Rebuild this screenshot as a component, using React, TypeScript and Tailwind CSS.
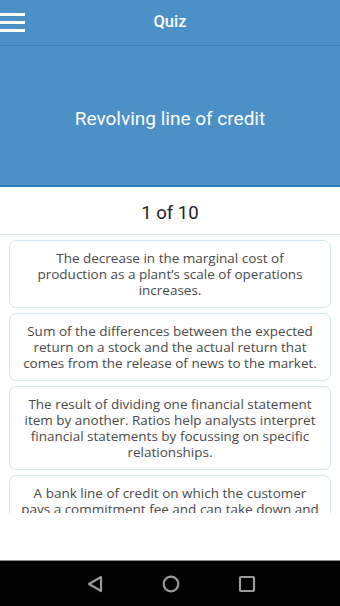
const CARDS = [
  'The decrease in the marginal cost of production as a plant\u2019s scale of operations increases.',
  'Sum of the differences between the expected return on a stock and the actual return that comes from the release of news to the market.',
  'The result of dividing one financial statement item by another. Ratios help analysts interpret financial statements by focussing on specific relationships.',
  'A bank line of credit on which the customer pays a commitment fee and can take down and repay funds according to the customer\u2019s needs.',
];

export default function App() {
  return (
    <div className="flex h-[606px] w-[340px] flex-col overflow-hidden bg-white font-['Roboto',sans-serif]">
      {/* app bar */}
      <div className="relative flex h-[46px] shrink-0 items-center justify-center border-b border-[#3f80b4] bg-[#4b91c7]">
        <div className="absolute left-0 top-[13px] flex w-[25px] flex-col gap-[5px]">
          <span className="h-[3px] w-full bg-white" />
          <span className="h-[3px] w-full bg-white" />
          <span className="h-[3px] w-full bg-white" />
        </div>
        <span className="text-[16.5px] font-medium text-white">Quiz</span>
      </div>

      {/* term */}
      <div className="flex h-[141px] shrink-0 items-center justify-center border-b-2 border-[#2b7cbf] bg-[#4b91c7] pt-[8px]">
        <span className="text-[19px] text-white">Revolving line of credit</span>
      </div>

      {/* counter */}
      <div className="flex h-[48px] shrink-0 items-center justify-center border-b border-[#dde7f1] pt-[6px]">
        <span className="text-[18.5px] text-[#222]">1 of 10</span>
      </div>

      {/* answers */}
      <div className="flex h-[278px] shrink-0 flex-col gap-[5px] overflow-hidden px-[9px] pt-[5px]">
        {CARDS.map((t) => (
          <div
            key={t}
            className="shrink-0 rounded-[7px] border border-[#d4e5f5] px-[10.5px] py-[9px] text-center font-['Open_Sans',sans-serif] text-[13.5px] leading-[16px] text-[#4a4a4a]"
          >
            {t}
          </div>
        ))}
      </div>

      <div className="flex-1" />

      {/* nav bar */}
      <div className="flex h-[46px] shrink-0 items-center border-t border-[#8c8c8c] bg-black">
        <div className="flex w-full items-center justify-center gap-[58px] pl-[2px]">
          <svg width="18" height="18" viewBox="0 0 18 18" fill="none" stroke="#9a9a9a" strokeWidth="2.2" strokeLinejoin="round">
            <path d="M15 2 L3 9 L15 16 Z" />
          </svg>
          <svg width="18" height="18" viewBox="0 0 18 18" fill="none" stroke="#9a9a9a" strokeWidth="2.2">
            <circle cx="9" cy="9" r="7.3" />
          </svg>
          <svg width="18" height="18" viewBox="0 0 18 18" fill="none" stroke="#9a9a9a" strokeWidth="2.2" strokeLinejoin="round">
            <rect x="2" y="2" width="14" height="14" rx="1" />
          </svg>
        </div>
      </div>
    </div>
  );
}
